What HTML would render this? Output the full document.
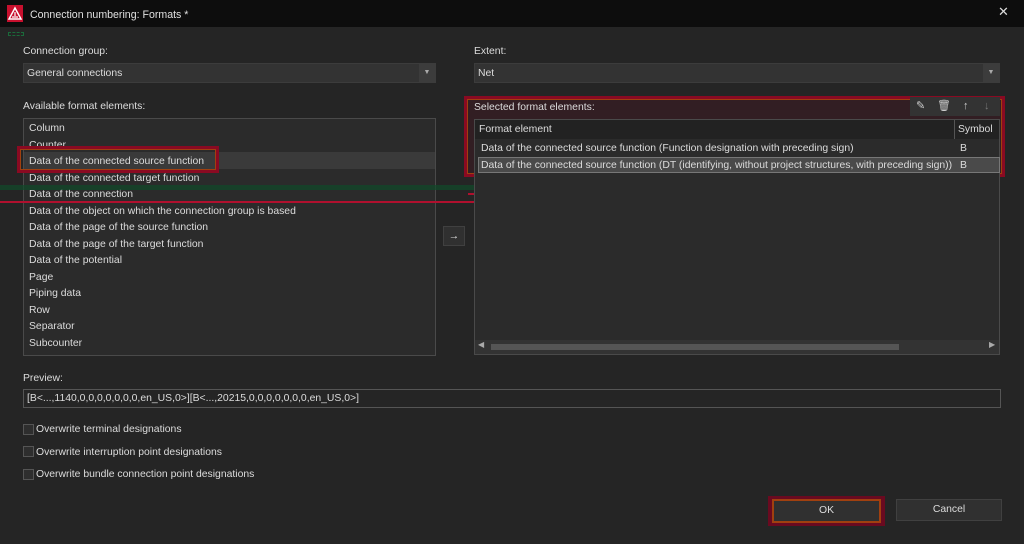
<!DOCTYPE html>
<html><head><meta charset="utf-8"><style>
*{box-sizing:border-box;margin:0;padding:0}
body{width:1024px;height:544px;background:#252525;font-family:"Liberation Sans",sans-serif;font-size:10.4px;color:#dcdcdc;position:relative;overflow:hidden}
.a{position:absolute;white-space:nowrap}
.box{position:absolute;border:1px solid #4a4a4a;background:#2b2b2b}
.combo{position:absolute;height:20px;background:#333;border:1px solid #3c3c3c;padding:4px 3px;line-height:12px}
.cb{position:absolute;width:11px;height:11px;border:1px solid #555;background:#2e2e2e}
.btn{position:absolute;background:#303030;border:1px solid #404040;text-align:center;line-height:20px}
</style></head><body>
<div class="a" style="left:0;top:0;width:1024px;height:27px;background:#0d0d0d"></div>
<svg class="a" style="top:5px;left:7px" width="16" height="17" viewBox="0 0 16 17"><rect width="16" height="17" fill="#c8102e"/><path d="M8 3 L14 14 H2 Z" fill="none" stroke="#fff" stroke-width="1.5"/><path d="M8 7v4M5 12h6" stroke="#fff" stroke-width="1.2"/></svg>
<div class="a" style="left:30px;top:9px;font-size:10.6px;color:#e0e0e0">Connection numbering: Formats *</div>
<div class="a" style="left:998px;top:4px;font-size:13px;color:#ddd">✕</div>
<div class="a" style="left:8px;top:32px;width:16px;height:4px;border:1px dashed #1a6a3a"></div>

<div class="a" style="left:23px;top:46px">Connection group:</div>
<div class="combo" style="left:23px;top:63px;width:413px">General connections<span style="position:absolute;right:0;top:0;width:16px;height:18px;background:#3c3c3c;font-size:7px;text-align:center;line-height:18px;color:#aaa">▼</span></div>
<div class="a" style="left:474px;top:46px">Extent:</div>
<div class="combo" style="left:474px;top:63px;width:526px">Net<span style="position:absolute;right:0;top:0;width:16px;height:18px;background:#3c3c3c;font-size:7px;text-align:center;line-height:18px;color:#aaa">▼</span></div>

<div class="a" style="left:23px;top:101px">Available format elements:</div>
<div class="box" style="left:23px;top:118px;width:413px;height:238px"></div>
<div class="a" style="left:24px;top:152px;width:411px;height:17px;background:#3a3a3a"></div>
<div class="a" style="left:29px;top:121px;line-height:16.5px">Column<br>Counter<br>Data of the connected source function<br>Data of the connected target function<br>Data of the connection<br>Data of the object on which the connection group is based<br>Data of the page of the source function<br>Data of the page of the target function<br>Data of the potential<br>Page<br>Piping data<br>Row<br>Separator<br>Subcounter</div>
<div class="a" style="left:17px;top:146px;width:202px;height:27px;border:3px solid #8a0a22;outline:1px solid #a0400f;outline-offset:-4px"></div>
<div class="a" style="left:0;top:185px;width:510px;height:5px;background:#0f4a2a;opacity:.7"></div>
<div class="a" style="left:0;top:201px;width:490px;height:2px;background:#b0102e"></div>
<div class="a" style="left:468px;top:193px;width:42px;height:2px;background:#b0102e"></div>
<div class="a" style="left:488px;top:200px;width:3px;height:70px;border-left:3px dashed #a0102e"></div>
<div class="a" style="left:495px;top:203px;width:3px;height:50px;border-left:3px dashed #0f5a30"></div>

<div class="btn" style="left:443px;top:226px;width:22px;height:20px">→</div>

<div class="a" style="left:464px;top:96px;width:541px;height:81px;border:3px solid #8a0a22;outline:1px solid #a0400f;outline-offset:-4px;background:rgba(90,10,30,.25)"></div>
<div class="a" style="left:474px;top:102px">Selected format elements:</div>
<div class="a" style="left:910px;top:97px;width:90px;height:19px;background:#333;color:#ccc;font-size:11px;line-height:19px"><span class="a" style="left:6px">✎</span><span class="a" style="left:27px">🗑</span><span class="a" style="left:53px">↑</span><span class="a" style="left:74px;color:#777">↓</span></div>
<div class="box" style="left:474px;top:119px;width:526px;height:236px"></div>
<div class="a" style="left:475px;top:120px;width:524px;height:19px;background:#222"></div>
<div class="a" style="left:954px;top:120px;width:1px;height:19px;background:#555"></div>
<div class="a" style="left:479px;top:124px">Format element</div>
<div class="a" style="left:958px;top:124px">Symbol</div>
<div class="a" style="left:481px;top:143px">Data of the connected source function (Function designation with preceding sign)</div>
<div class="a" style="left:960px;top:143px">B</div>
<div class="a" style="left:478px;top:157px;width:522px;height:16px;background:#4a4a4a;border:1px solid #777"></div>
<div class="a" style="left:481px;top:160px">Data of the connected source function (DT (identifying, without project structures, with preceding sign))</div>
<div class="a" style="left:960px;top:160px">B</div>
<div class="a" style="left:475px;top:340px;width:524px;height:14px;background:#333"></div>
<div class="a" style="left:491px;top:344px;width:408px;height:6px;background:#555"></div>
<div class="a" style="left:478px;top:340px;font-size:8px;color:#aaa">◀</div>
<div class="a" style="left:989px;top:340px;font-size:8px;color:#aaa">▶</div>

<div class="a" style="left:23px;top:373px">Preview:</div>
<div class="a" style="left:23px;top:389px;width:978px;height:19px;border:1px solid #555;background:#252525;padding:3px 3px">[B&lt;...,1140,0,0,0,0,0,0,0,en_US,0&gt;][B&lt;...,20215,0,0,0,0,0,0,0,en_US,0&gt;]</div>

<div class="cb" style="left:23px;top:424px"></div><div class="a" style="left:36px;top:424px">Overwrite terminal designations</div>
<div class="cb" style="left:23px;top:446px"></div><div class="a" style="left:36px;top:447px">Overwrite interruption point designations</div>
<div class="cb" style="left:23px;top:469px"></div><div class="a" style="left:36px;top:469px">Overwrite bundle connection point designations</div>

<div class="a" style="left:768px;top:496px;width:117px;height:30px;background:#6a0a20"></div>
<div class="btn" style="left:772px;top:499px;width:109px;height:24px;border:2px solid #a0400f;line-height:20px">OK</div>
<div class="btn" style="left:896px;top:499px;width:106px;height:22px">Cancel</div>
</body></html>
